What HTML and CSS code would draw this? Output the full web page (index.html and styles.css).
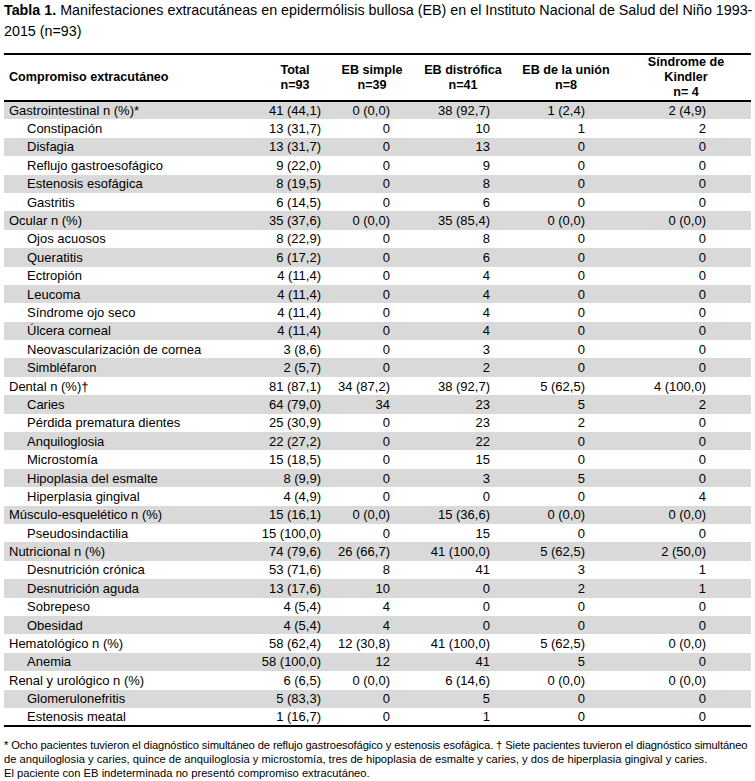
FILE: index.html
```html
<!DOCTYPE html>
<html lang="es">
<head>
<meta charset="utf-8">
<title>Tabla 1</title>
<link rel="stylesheet" href="styles.css">
</head>
<body>
<div class="page">
  <p class="caption"><span class="l1"><b>Tabla 1.</b> Manifestaciones extracutáneas en epidermólisis bullosa (EB) en el Instituto Nacional de Salud del Niño 1993-</span><span class="l2">2015 (n=93)</span></p>
  <table class="data">
    <colgroup>
      <col class="c-label"><col class="c-total"><col class="c-simple"><col class="c-dist"><col class="c-union"><col class="c-kind">
    </colgroup>
    <thead>
      <tr>
        <th class="h-label">Compromiso extracutáneo</th>
        <th>Total<br>n=93</th>
        <th>EB simple<br>n=39</th>
        <th>EB distrófica<br>n=41</th>
        <th>EB de la unión<br>n=8</th>
        <th>Síndrome de<br>Kindler<br>n= 4</th>
      </tr>
    </thead>
    <tbody>
      <tr class="cat"><td>Gastrointestinal n (%)*</td><td>41 (44,1)</td><td>0 (0,0)</td><td>38 (92,7)</td><td>1 (2,4)</td><td>2 (4,9)</td></tr>
      <tr><td>Constipación</td><td>13 (31,7)</td><td>0</td><td>10</td><td>1</td><td>2</td></tr>
      <tr><td>Disfagia</td><td>13 (31,7)</td><td>0</td><td>13</td><td>0</td><td>0</td></tr>
      <tr><td>Reflujo gastroesofágico</td><td>9 (22,0)</td><td>0</td><td>9</td><td>0</td><td>0</td></tr>
      <tr><td>Estenosis esofágica</td><td>8 (19,5)</td><td>0</td><td>8</td><td>0</td><td>0</td></tr>
      <tr><td>Gastritis</td><td>6 (14,5)</td><td>0</td><td>6</td><td>0</td><td>0</td></tr>
      <tr class="cat"><td>Ocular n (%)</td><td>35 (37,6)</td><td>0 (0,0)</td><td>35 (85,4)</td><td>0 (0,0)</td><td>0 (0,0)</td></tr>
      <tr><td>Ojos acuosos</td><td>8 (22,9)</td><td>0</td><td>8</td><td>0</td><td>0</td></tr>
      <tr><td>Queratitis</td><td>6 (17,2)</td><td>0</td><td>6</td><td>0</td><td>0</td></tr>
      <tr><td>Ectropión</td><td>4 (11,4)</td><td>0</td><td>4</td><td>0</td><td>0</td></tr>
      <tr><td>Leucoma</td><td>4 (11,4)</td><td>0</td><td>4</td><td>0</td><td>0</td></tr>
      <tr><td>Síndrome ojo seco</td><td>4 (11,4)</td><td>0</td><td>4</td><td>0</td><td>0</td></tr>
      <tr><td>Úlcera corneal</td><td>4 (11,4)</td><td>0</td><td>4</td><td>0</td><td>0</td></tr>
      <tr><td>Neovascularización de cornea</td><td>3 (8,6)</td><td>0</td><td>3</td><td>0</td><td>0</td></tr>
      <tr><td>Simbléfaron</td><td>2 (5,7)</td><td>0</td><td>2</td><td>0</td><td>0</td></tr>
      <tr class="cat"><td>Dental n (%)†</td><td>81 (87,1)</td><td>34 (87,2)</td><td>38 (92,7)</td><td>5 (62,5)</td><td>4 (100,0)</td></tr>
      <tr><td>Caries</td><td>64 (79,0)</td><td>34</td><td>23</td><td>5</td><td>2</td></tr>
      <tr><td>Pérdida prematura dientes</td><td>25 (30,9)</td><td>0</td><td>23</td><td>2</td><td>0</td></tr>
      <tr><td>Anquiloglosia</td><td>22 (27,2)</td><td>0</td><td>22</td><td>0</td><td>0</td></tr>
      <tr><td>Microstomía</td><td>15 (18,5)</td><td>0</td><td>15</td><td>0</td><td>0</td></tr>
      <tr><td>Hipoplasia del esmalte</td><td>8 (9,9)</td><td>0</td><td>3</td><td>5</td><td>0</td></tr>
      <tr><td>Hiperplasia gingival</td><td>4 (4,9)</td><td>0</td><td>0</td><td>0</td><td>4</td></tr>
      <tr class="cat"><td>Músculo-esquelético n (%)</td><td>15 (16,1)</td><td>0 (0,0)</td><td>15 (36,6)</td><td>0 (0,0)</td><td>0 (0,0)</td></tr>
      <tr><td>Pseudosindactilia</td><td>15 (100,0)</td><td>0</td><td>15</td><td>0</td><td>0</td></tr>
      <tr class="cat"><td>Nutricional n (%)</td><td>74 (79,6)</td><td>26 (66,7)</td><td>41 (100,0)</td><td>5 (62,5)</td><td>2 (50,0)</td></tr>
      <tr><td>Desnutrición crónica</td><td>53 (71,6)</td><td>8</td><td>41</td><td>3</td><td>1</td></tr>
      <tr><td>Desnutrición aguda</td><td>13 (17,6)</td><td>10</td><td>0</td><td>2</td><td>1</td></tr>
      <tr><td>Sobrepeso</td><td>4 (5,4)</td><td>4</td><td>0</td><td>0</td><td>0</td></tr>
      <tr><td>Obesidad</td><td>4 (5,4)</td><td>4</td><td>0</td><td>0</td><td>0</td></tr>
      <tr class="cat"><td>Hematológico n (%)</td><td>58 (62,4)</td><td>12 (30,8)</td><td>41 (100,0)</td><td>5 (62,5)</td><td>0 (0,0)</td></tr>
      <tr><td>Anemia</td><td>58 (100,0)</td><td>12</td><td>41</td><td>5</td><td>0</td></tr>
      <tr class="cat"><td>Renal y urológico n (%)</td><td>6 (6,5)</td><td>0 (0,0)</td><td>6 (14,6)</td><td>0 (0,0)</td><td>0 (0,0)</td></tr>
      <tr><td>Glomerulonefritis</td><td>5 (83,3)</td><td>0</td><td>5</td><td>0</td><td>0</td></tr>
      <tr><td>Estenosis meatal</td><td>1 (16,7)</td><td>0</td><td>1</td><td>0</td><td>0</td></tr>
    </tbody>
  </table>
  <div class="notes">
    <span class="line tight">* Ocho pacientes tuvieron el diagnóstico simultáneo de reflujo gastroesofágico y estenosis esofágica. † Siete pacientes tuvieron el diagnóstico simultáneo</span>
    <span class="line">de anquiloglosia y caries, quince de anquiloglosia y microstomía, tres de hipoplasia de esmalte y caries, y dos de hiperplasia gingival y caries.</span>
    <span class="line">El paciente con EB indeterminada no presentó compromiso extracutáneo.</span>
  </div>
</div>
</body>
</html>
```
FILE: styles.css
```css
html, body {
  margin: 0;
  padding: 0;
  background: #ffffff;
}

body {
  font-family: "Liberation Sans", Arial, sans-serif;
  color: #000000;
}

.page {
  width: 747px;
  padding: 0 4px;
}

.caption {
  margin: 0;
  font-size: 14.3px;
  line-height: 21px;
}

.caption .l1,
.caption .l2 {
  display: block;
  white-space: nowrap;
}

.data {
  margin-top: 11px;
  width: 747px;
  border-collapse: collapse;
  table-layout: fixed;
  font-size: 13px;
}

.c-label { width: 257px; }
.c-total { width: 68px; }
.c-simple { width: 86px; }
.c-dist { width: 96px; }
.c-union { width: 110px; }
.c-kind { width: 130px; }

.data thead tr {
  border-top: 2px solid #000000;
  border-bottom: 2px solid #000000;
}

.data th {
  font-weight: bold;
  font-size: 12.6px;
  line-height: 15px;
  text-align: center;
  vertical-align: middle;
  padding: 0;
  height: 45px;
}

.data th.h-label {
  text-align: left;
  padding-left: 5px;
}

.data tbody tr {
  height: 18.4px;
}

.data tbody tr:nth-child(odd) {
  background: #d9d9d9;
}

.data tbody tr:last-child {
  border-bottom: 2px solid #000000;
}

.data td {
  padding: 0;
  line-height: 15px;
  white-space: nowrap;
  text-align: right;
  vertical-align: middle;
}

.data td:nth-child(1) {
  text-align: left;
  padding-left: 23px;
}

.data tr.cat td:nth-child(1) {
  padding-left: 5px;
}

.data td:nth-child(2) { padding-right: 8px; }
.data td:nth-child(3) { padding-right: 25px; }
.data td:nth-child(4) { padding-right: 21px; }
.data td:nth-child(5) { padding-right: 36px; }
.data td:nth-child(6) { padding-right: 45px; }

.notes {
  margin-top: 11px;
  font-size: 11.2px;
  line-height: 14px;
}

.notes .line {
  display: block;
  white-space: nowrap;
}

.notes .tight {
  letter-spacing: -0.12px;
}
```
